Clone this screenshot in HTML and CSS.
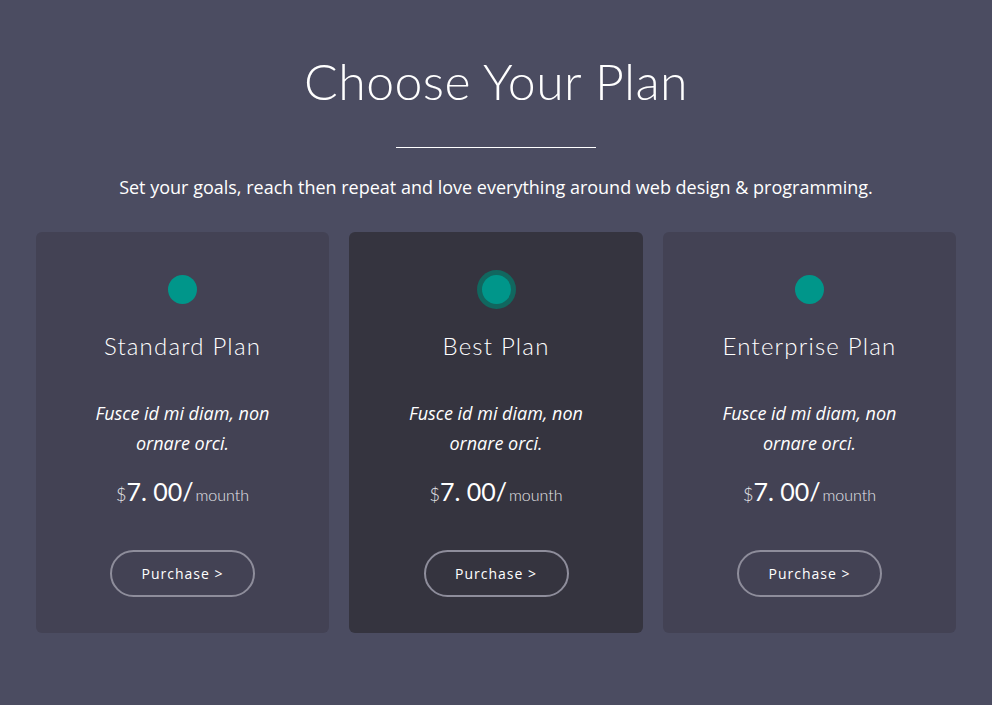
FILE: index.html
```html
<!DOCTYPE html>
<html lang="en">
<head>
<meta charset="utf-8">
<title>Choose Your Plan</title>
<link rel="stylesheet" href="styles.css">
</head>
<body>
<section class="pricing">
  <h1 class="title">Choose Your Plan</h1>
  <hr class="divider">
  <p class="subtitle">Set your goals, reach then repeat and love everything around web design &amp; programming.</p>
  <div class="cards">
    <div class="card">
      <span class="dot"></span>
      <h2 class="plan">Standard Plan</h2>
      <p class="desc">Fusce id mi diam, non ornare orci.</p>
      <p class="price"><span class="cur">$</span><span class="amt">7. 00/</span><span class="per">mounth</span></p>
      <a class="btn" href="#">Purchase &gt;</a>
    </div>
    <div class="card card-best">
      <span class="dot dot-ring"></span>
      <h2 class="plan">Best Plan</h2>
      <p class="desc">Fusce id mi diam, non ornare orci.</p>
      <p class="price"><span class="cur">$</span><span class="amt">7. 00/</span><span class="per">mounth</span></p>
      <a class="btn" href="#">Purchase &gt;</a>
    </div>
    <div class="card">
      <span class="dot"></span>
      <h2 class="plan">Enterprise Plan</h2>
      <p class="desc">Fusce id mi diam, non ornare orci.</p>
      <p class="price"><span class="cur">$</span><span class="amt">7. 00/</span><span class="per">mounth</span></p>
      <a class="btn" href="#">Purchase &gt;</a>
    </div>
  </div>
</section>
</body>
</html>
```
FILE: styles.css
```css
html, body {
  margin: 0;
  padding: 0;
  background: #4b4c61;
  color: #ffffff;
  font-family: "Open Sans", "Liberation Sans", sans-serif;
}
.pricing {
  width: 920px;
  margin: 0 auto;
  padding-top: 51px;
  display: flex;
  flex-direction: column;
  align-items: center;
}
.title {
  margin: 0;
  font-family: Lato, "Liberation Sans", sans-serif;
  font-weight: 300;
  font-size: 50px;
  line-height: 60px;
  letter-spacing: 0.4px;
}
.divider {
  width: 200px;
  height: 1px;
  border: 0;
  background: #ffffff;
  margin: 36px 0 0;
}
.subtitle {
  margin: 26px 0 0;
  font-size: 18px;
  line-height: 26px;
}
.cards {
  margin-top: 32px;
  width: 920px;
  display: grid;
  grid-template-columns: 293px 294px 293px;
  gap: 20px;
}
.card {
  height: 401px;
  background: #434254;
  border-radius: 6px;
  display: flex;
  flex-direction: column;
  align-items: center;
  box-sizing: border-box;
  padding-top: 43px;
}
.card-best {
  background: #35343f;
}
.dot {
  width: 29px;
  height: 29px;
  border-radius: 50%;
  background: #00968a;
}
.dot-ring {
  box-shadow: 0 0 0 5px #11675f;
}
.plan {
  margin: 28px 0 0;
  font-family: Lato, "Liberation Sans", sans-serif;
  font-weight: 300;
  font-size: 24px;
  line-height: 28px;
  letter-spacing: 1.2px;
}
.desc {
  margin: 38px 0 0;
  width: 186px;
  text-align: center;
  font-style: italic;
  font-size: 18px;
  line-height: 30px;
}
.price {
  margin: 17px 0 0;
  line-height: 32px;
  font-family: Lato, "Liberation Sans", sans-serif;
  color: #e6e6ea;
}
.cur {
  font-size: 18px;
  font-weight: 300;
}
.amt {
  font-size: 25px;
  font-weight: 400;
  color: #ffffff;
}
.per {
  font-size: 16px;
  font-weight: 300;
  margin-left: 2px;
}
.btn {
  margin-top: 39px;
  width: 145px;
  height: 47px;
  box-sizing: border-box;
  border: 2px solid #8e8d9b;
  border-radius: 24px;
  display: flex;
  align-items: center;
  justify-content: center;
  color: #ffffff;
  text-decoration: none;
  font-size: 14px;
  letter-spacing: 1px;
}
```
